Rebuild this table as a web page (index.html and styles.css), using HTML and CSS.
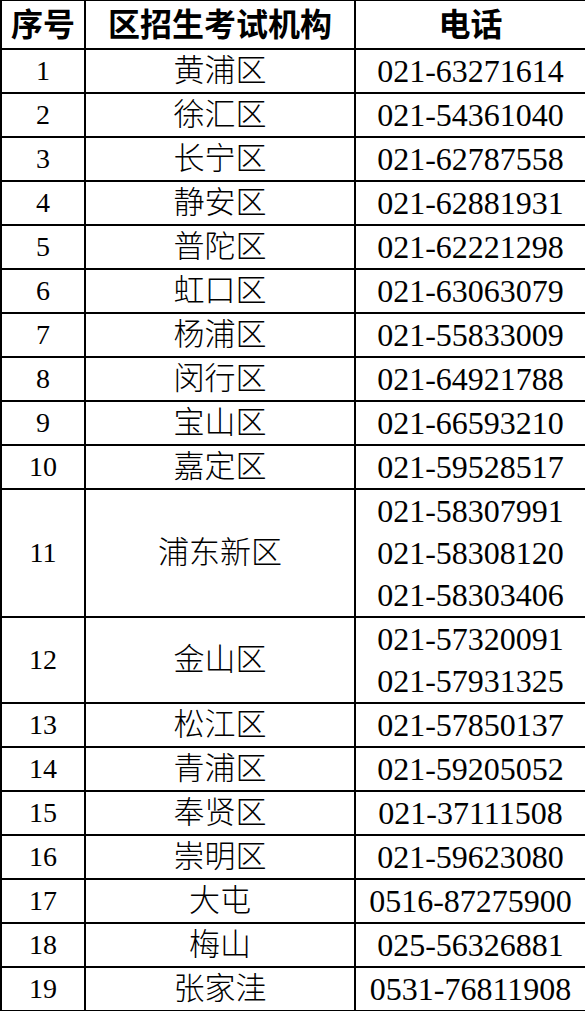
FILE: index.html
```html
<!DOCTYPE html>
<html lang="zh-CN">
<head>
<meta charset="utf-8">
<title>区招生考试机构电话</title>
<link rel="stylesheet" href="styles.css">
</head>
<body>
<table class="contacts">
  <colgroup>
    <col class="c-no">
    <col class="c-name">
    <col class="c-tel">
  </colgroup>
  <thead>
    <tr><th>序号</th><th>区招生考试机构</th><th>电话</th></tr>
  </thead>
  <tbody>
    <tr><td>1</td><td>黄浦区</td><td>021-63271614</td></tr>
    <tr><td>2</td><td>徐汇区</td><td>021-54361040</td></tr>
    <tr><td>3</td><td>长宁区</td><td>021-62787558</td></tr>
    <tr><td>4</td><td>静安区</td><td>021-62881931</td></tr>
    <tr><td>5</td><td>普陀区</td><td>021-62221298</td></tr>
    <tr><td>6</td><td>虹口区</td><td>021-63063079</td></tr>
    <tr><td>7</td><td>杨浦区</td><td>021-55833009</td></tr>
    <tr><td>8</td><td>闵行区</td><td>021-64921788</td></tr>
    <tr><td>9</td><td>宝山区</td><td>021-66593210</td></tr>
    <tr><td>10</td><td>嘉定区</td><td>021-59528517</td></tr>
    <tr><td>11</td><td>浦东新区</td><td><div>021-58307991</div><div>021-58308120</div><div>021-58303406</div></td></tr>
    <tr><td>12</td><td>金山区</td><td><div>021-57320091</div><div>021-57931325</div></td></tr>
    <tr><td>13</td><td>松江区</td><td>021-57850137</td></tr>
    <tr><td>14</td><td>青浦区</td><td>021-59205052</td></tr>
    <tr><td>15</td><td>奉贤区</td><td>021-37111508</td></tr>
    <tr><td>16</td><td>崇明区</td><td>021-59623080</td></tr>
    <tr><td>17</td><td>大屯</td><td>0516-87275900</td></tr>
    <tr><td>18</td><td>梅山</td><td>025-56326881</td></tr>
    <tr><td>19</td><td>张家洼</td><td>0531-76811908</td></tr>
  </tbody>
</table>
</body>
</html>
```

FILE: styles.css
```css
html, body {
  margin: 0;
  padding: 0;
  background: #ffffff;
}

.contacts {
  border-collapse: collapse;
  table-layout: fixed;
  width: 585px;
  font-family: "Liberation Serif", "Noto Sans CJK SC", serif;
  font-size: 31px;
  color: #000000;
  margin-top: -1px;
}

.c-no { width: 84px; }
.c-name { width: 270px; }
.c-tel { width: 231px; }

.contacts th,
.contacts td {
  border: 2px solid #000000;
  padding: 0;
  text-align: center;
  vertical-align: middle;
  line-height: 42px;
  white-space: nowrap;
}

.contacts td {
  font-weight: 300;
}

.contacts th {
  font-weight: bold;
  line-height: 45px;
  font-size: 32px;
  padding-top: 2px;
}

.contacts td:nth-child(1) {
  font-size: 28px;
}

.contacts td:nth-child(3) {
  font-size: 32px;
}
```
